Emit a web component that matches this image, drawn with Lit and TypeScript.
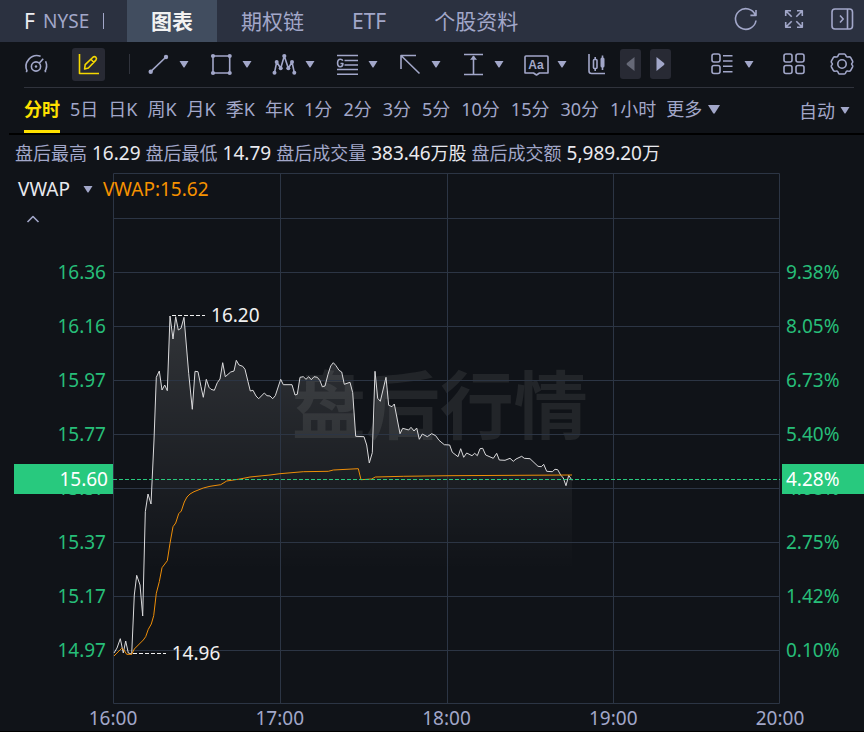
import { LitElement, html, css, svg } from "lit";
import { customElement, state } from "lit/decorators.js";

const PRICE =
  "114,653 117,648 120.3,638.7 123.3,653 125.7,641 128.3,653 131.7,654 134.3,595 136.7,575.3 140,585 142.7,616 145.3,511.7 148,494 151,504 154,440 156.3,377.3 159.3,371 162,390 164.7,385 167.3,390.7 170,316 173,339 175.7,316.7 178.3,330 181,328.3 184,317.3 188.7,373.3 192.3,409.3 195,371.3 198,371.7 201,386.7 203.3,397.3 206.3,379.3 209,387.3 211,389.3 214.3,390.3 217.3,382.7 220,379 222.7,362.7 225.3,376.7 230.7,372 234,371 236.3,360.3 239,365 242.7,366.3 245,369.3 248,381.7 250.3,391 253,390.3 256,396 258.7,398.7 264.3,393 267,395.7 270,396 272.7,398.7 275.3,395.7 280.7,379.3 283.3,384.7 292,384.7 295,395 297.3,394.3 300,377.3 303.3,376.7 306,379.3 308.7,376.7 311.3,379.7 314,376.7 317.3,377.3 320,380.7 322.3,386.7 325,386 328,374.3 330.7,366 333.3,362.7 336,365.7 339,370.3 341.7,372 344.3,384.3 350,382.3 352.7,392.7 355.7,436.3 364,436.7 366.7,445 369.3,463 372.3,452.7 375,371.3 377.7,398.3 380.3,401.3 386,377.3 388.7,405.3 392,406.7 394.3,404 400,433.7 402.7,428.3 408.7,430 411,427.3 414,431 416.7,428 419.3,439.3 422.3,434 427.3,436.7 431.7,433.7 435.7,435.7 439,440.3 444.3,444.7 449.7,445 452.3,452.3 458,456.7 460.7,448.7 463.7,457.3 466.7,453 472,455.7 474.7,453.3 477.3,455.7 480,448.7 482.7,448.3 485.7,455 493.3,458.3 496.7,453.3 499.3,460 505,460.3 510,458.3 513.3,461.3 516,459 521.7,456.3 524.3,458.3 530,458.7 538,466.3 541.3,466.7 543.7,464.3 546.7,471.3 552.3,471.7 555,469.3 557.7,469.7 560.7,475 563.3,478 566,485.7 568.7,475.3 572,480.3";

const VWAP =
  "114,656 121.7,648.3 124,650 126.7,654.3 131.7,654.3 134.3,649 143.3,640 145.7,636.7 148.3,629.3 151.3,624 153.7,615.7 156.3,593.3 159.3,581.7 162,567.7 167.3,560.7 170,543.3 173,526.7 175.7,523 178.7,513.7 181.3,511 184.3,502 187,497 190,494 194,491.7 203.3,488 210,486.3 220.7,484.7 226.7,481 240,479 250,477 270,475 280,473.7 303.3,471.7 328.3,471.3 333.3,470 358.3,468.7 361,479.7 371.7,479 375.3,477 403.3,476.3 450,475.7 572,475";

const ROWS = [218, 272, 326, 380, 434, 488, 542, 596, 650];
const COLS = [280, 447, 613];
const PRICES = ["16.36", "16.16", "15.97", "15.77", "15.57", "15.37", "15.17", "14.97"];
const PERCENTS = ["9.38%", "8.05%", "6.73%", "5.40%", "4.08%", "2.75%", "1.42%", "0.10%"];
const TIMES = ["16:00", "17:00", "18:00", "19:00", "20:00"];
const DAYS = ["分时", "5日", "日K", "周K", "月K", "季K", "年K"];
const MINUTES = ["1分", "2分", "3分", "5分", "10分", "15分", "30分", "1小时"];
const TABS = ["图表", "期权链", "ETF", "个股资料"];
const STATS = [
  ["盘后最高", "16.29", ""],
  ["盘后最低", "14.79", ""],
  ["盘后成交量", "383.46", "万股"],
  ["盘后成交额", "5,989.20", "万"],
];

const icon = (body: unknown, w = 24) =>
  html`<svg class="icon" width=${w} height="24" viewBox="0 0 ${w} 24" aria-hidden="true">${body}</svg>`;
const caret = html`<svg class="caret" width="10" height="7" viewBox="0 0 10 7" aria-hidden="true"><path class="solid" d="M.5 0h9L5.6 6.2q-.6.7-1.2 0z" /></svg>`;

const gauge = svg`<path d="M3.2 19.5A11 11 0 0 1 16.6 4.2M21.6 9.3A11 11 0 0 1 20.9 19.5M1.8 19.5h1.4M20.6 19.5h1.6"/><circle cx="12" cy="14.5" r="4.6"/><circle class="solid" cx="12" cy="14.5" r="1.2"/><path d="M15.2 11.2l4-4.4"/>`;
const pencil = svg`<path d="M2.5 2v19.5H22"/><path d="M7.6 17l.6-4.4 8-7.600q1.400-1 2.700.3 1.200 1.400 0 2.800l-7.500 7.900zM14 7.300l2.900 3.200"/>`;
const refresh = svg`<path d="M21.4 8.2A10.3 10.3 0 1 0 22 13.5M22 3v5.4h-5.6"/>`;
const expand = svg`<path d="M3.700 9V3.700H9M3.700 3.700l6 6M15 3.700h5.300V9M20.300 3.700l-6 6M3.700 15v5.300H9M3.700 20.300l6-6M20.300 15v5.300H15M20.300 20.300l-6-6"/>`;
const panel = svg`<rect x="2" y="2" width="20.500" height="20" rx="3"/><path d="M17.500 2v20M10 8.500l3.200 3.500-3.200 3.500"/>`;
const candles = svg`<path d="M2 2v17q0 2.500 2.500 2.500H18"/><path d="M8.200 5v2.500M8.200 16.500V19M15.500 3.500V18"/><rect x="6.500" y="7.500" width="3.500" height="9" rx="1"/><rect class="solid" x="13.500" y="5.500" width="4" height="10" rx="1.500"/>`;
const list = svg`<rect x="2" y="2" width="8" height="8" rx="2"/><rect x="2" y="13.500" width="8" height="8" rx="2"/><path d="M13 3.700h9.500M13 9h9.500M13 14.300h9.500M13 19.700h9.500"/>`;
const tiles = svg`<rect x="2" y="2" width="8" height="8" rx="2"/><rect x="14" y="2" width="8" height="8" rx="2"/><rect x="2" y="13.500" width="8" height="8" rx="2"/><rect x="14" y="13.500" width="8" height="8" rx="2"/>`;
const gear = svg`<circle cx="12" cy="12" r="4.200"/><path d="M9.600 2h4.800q.8 0 1.200 1l.5 1.200q.6 1 1.700.8l1.400-.2q1 0 1.500.9l1.900 3.500q.4.800-.2 1.500l-.5.500q-.6.800 0 1.600l.5.500q.6.700.2 1.500l-1.900 3.500q-.5.900-1.500.9l-1.400-.2q-1.100-.2-1.700.8l-.5 1.200q-.4 1-1.200 1H9.600q-.8 0-1.200-1l-.5-1.200q-.6-1-1.700-.8l-1.400.2q-1 0-1.500-.9l-1.900-3.500q-.4-.8.200-1.500l.5-.5q.6-.8 0-1.600l-.5-.5q-.6-.7-.2-1.500l1.900-3.500q.5-.9 1.500-.9l1.400.2q1.100.2 1.700-.8L8.400 3q.4-1 1.200-1z"/>`;

const TOOLS: [string, unknown][] = [
  ["线段", svg`<path d="M5.700 19.700L21 5"/><circle class="solid" cx="5.700" cy="19.700" r="2.200"/><circle class="solid" cx="21" cy="5" r="2.200"/>`],
  ["矩形", svg`<rect x="5" y="4" width="16.700" height="17"/><g class="solid"><circle cx="5" cy="4" r="2.100"/><circle cx="21.700" cy="4" r="2.100"/><circle cx="5" cy="21" r="2.100"/><circle cx="21.700" cy="21" r="2.100"/></g>`],
  ["形态", svg`<path d="M3.500 20.700L5.700 10l4 6.300L13.300 4l4 12.300L21 10l2.300 10.700"/><g class="solid"><circle cx="3.500" cy="20.700" r="2"/><circle cx="5.700" cy="10" r="2"/><circle cx="9.700" cy="16.300" r="2"/><circle cx="13.300" cy="4" r="2.100"/><circle cx="17.300" cy="16.300" r="2"/><circle cx="21" cy="10" r="2"/><circle cx="23.300" cy="20.700" r="2"/></g>`],
  ["江恩", svg`<path d="M3 3.500h21M10.500 8.500H24M10.500 13H24M3 17.500h21M3 22.300h21"/><path d="M8.800 8.800Q8.200 7.200 6.300 7.200 3.600 7.200 3.600 11T6.300 14.700q2.600 0 2.600-3.200H6.500"/>`],
  ["箭头", svg`<path d="M19 3.500H4V17M4 3.500L22.500 21.500"/>`],
  ["测量", svg`<path d="M4 2.500h19M4 22.500h19M13.500 4v18"/><path class="solid" d="M13.500 3.500l3.500 4.300h-7z"/>`],
  ["文字", svg`<path d="M4 4h20q1 0 1 1v16h-8.500L13.500 23l-3-2H2V5q0-1 1-1z"/><text class="aa" x="13" y="17">Aa</text>`],
];

@customElement("app-root")
export class AppRoot extends LitElement {
  @state() private tab = TABS[0];
  @state() private period = DAYS[0];

  static styles = css`
    :host {
      --ink: #a2a7c9;
      --line: #2c3544;
      --up: #27be79;
      display: flex;
      flex-direction: column;
      min-height: 100vh;
      box-sizing: border-box;
      background: #101318;
      color: var(--ink);
      font: 18px/24px "Noto Sans", "Noto Sans CJK SC", sans-serif;
      white-space: nowrap;
      overflow: hidden;
    }
    button {
      font: inherit;
      color: inherit;
      background: none;
      border: 0;
      margin: 0;
      padding: 0;
      display: flex;
      align-items: center;
      cursor: pointer;
    }
    .icon, .caret { display: block; flex: none; overflow: visible; }
    .icon { fill: none; stroke: currentColor; stroke-width: 1.6; stroke-linejoin: round; }
    .solid { fill: currentColor; stroke: none; }
    .aa {
      fill: currentColor;
      stroke: none;
      font: bold 12px "Liberation Sans", sans-serif;
      text-anchor: middle;
    }
    header {
      display: flex;
      height: 42px;
      background: #2b3140;
      padding: 0 10px 0 24px;
    }
    .symbol { display: flex; align-items: center; width: 103px; font-size: 19px; }
    .ticker { width: 19px; font-size: 21px; color: #ededf2; }
    .bar { width: 1px; height: 16px; background: currentColor; margin-left: 14px; }
    .tabs { display: flex; flex: 1; }
    .tab { padding: 0 24px; font-size: 21px; }
    .tab.on { background: #414d5f; color: #f2f2f2; font-weight: 700; }
    .group { display: flex; align-items: center; gap: 24px; }
    .window { padding-bottom: 4px; }
    .toolbar {
      display: flex;
      align-items: center;
      height: 44px;
      margin: 0 10px 0 24px;
      padding-bottom: 1px;
      border-bottom: 1px solid #30333c;
    }
    .draw {
      width: 33px;
      height: 33px;
      justify-content: center;
      border-radius: 3px;
      background: #282a34;
      color: #f5d800;
    }
    .sep { width: 1px; height: 20px; background: #30333c; }
    .tools { display: flex; gap: 19px; margin: 0 20px 0 15px; }
    .tool { gap: 8px; }
    .steps { display: flex; gap: 9px; margin: 0 auto 0 13px; }
    .step {
      width: 21px;
      height: 30px;
      justify-content: center;
      border-radius: 3px;
      background: #282a34;
    }
    .step:disabled { color: #666977; }
    .views { gap: 10px; margin-right: 4px; }
    .periods {
      display: flex;
      height: 45px;
      margin-left: 9px;
      padding: 0 14px 0 15px;
      border-bottom: 2px solid #000;
      gap: 10px;
    }
    .days, .minutes { display: flex; }
    .days { gap: 10px; }
    .minutes { gap: 11px; }
    .period { border-bottom: 3px solid transparent; }
    .period.on { color: #ffe100; border-color: #ffe100; font-weight: 700; }
    .more { gap: 6px; }
    .auto { gap: 5px; margin-left: auto; }
    .stats {
      display: flex;
      align-items: center;
      gap: 5px;
      height: 36px;
      margin: 0;
      padding: 0 0 2px 15px;
    }
    .stat { display: flex; gap: 5px; }
    .stat dd { margin: 0; color: #e9e9ee; font-size: 19px; }
    .unit { font-size: 18px; }
    .chart {
      position: relative;
      flex: 1;
      display: grid;
      grid-template: minmax(420px, 1fr) 28px / 113px minmax(0, 1fr) 84px;
      font-size: 19px;
    }
    .axis {
      position: relative;
      display: grid;
      grid-template-rows: 72fr repeat(8, 54fr) 27fr;
      color: var(--up);
      align-items: center;
    }
    .axis::before { content: ""; }
    .left { justify-items: end; padding-right: 7px; }
    .right { padding-left: 6px; }
    .badge {
      position: absolute;
      top: 57.7%;
      transform: translateY(-50%);
      height: 30px;
      line-height: 30px;
      background: #28c97e;
      color: #fff;
      box-sizing: border-box;
    }
    .left .badge { left: 14px; right: 0; text-align: right; padding-right: 5px; }
    .right .badge { left: 2px; right: 0; padding-left: 4px; }
    .plot { position: relative; }
    .canvas { position: absolute; inset: 0; width: 100%; height: 100%; }
    .canvas * { vector-effect: non-scaling-stroke; fill: none; }
    .canvas .grid { stroke: var(--line); }
    .canvas .area { fill: url(#fade); }
    .canvas .price { stroke: #d9d9db; stroke-linejoin: round; }
    .canvas .vwap { stroke: #ee8e08; stroke-linejoin: round; }
    .canvas .now { stroke: #28c97e; stroke-dasharray: 4 2; }
    .canvas .lead { stroke: #f0f0f0; stroke-dasharray: 4 2; }
    .mark {
      position: absolute;
      left: 49%;
      top: 43%;
      transform: translate(-50%, -50%);
      font: 700 74px/80px "Noto Sans CJK SC", sans-serif;
      color: #222529;
    }
    .tag { position: absolute; transform: translateY(-50%); color: #f0f0f0; }
    .high { left: 14.7%; top: 26.7%; }
    .low { left: 8.8%; top: 90.4%; }
    .times { grid-area: 2 / 2; display: flex; justify-content: space-between; align-items: center; }
    .time { display: flex; justify-content: center; width: 0; }
    .legend { position: absolute; left: 18px; top: 4px; display: flex; gap: 10px; color: #f79200; }
    .indicator { gap: 13px; color: var(--ink); }
    .name { color: #e9e9ee; }
    .fold { position: absolute; left: 26px; top: 39px; height: 14px; }
    .foot { height: 1px; background: #000; margin-top: -1px; }
  `;

  private periodButton(p: string) {
    return html`<button class="period ${p === this.period ? "on" : ""}" @click=${() => (this.period = p)}>${p}</button>`;
  }

  render() {
    return html`
      <header>
        <div class="symbol"><span class="ticker">F</span><span>NYSE</span><span class="bar"></span></div>
        <nav class="tabs">
          ${TABS.map((t) => html`<button class="tab ${t === this.tab ? "on" : ""}" @click=${() => (this.tab = t)}>${t}</button>`)}
        </nav>
        <div class="group window">
          <button aria-label="刷新">${icon(refresh)}</button>
          <button aria-label="全屏">${icon(expand)}</button>
          <button aria-label="侧栏">${icon(panel)}</button>
        </div>
      </header>

      <div class="toolbar">
        <div class="group">
          <button aria-label="仪表">${icon(gauge)}</button>
          <button class="draw" aria-label="画线">${icon(pencil)}</button>
          <span class="sep"></span>
        </div>
        <div class="tools">
          ${TOOLS.map(([label, body]) => html`<button class="tool" aria-label=${label}>${icon(body, 26)}${caret}</button>`)}
        </div>
        <button aria-label="K线">${icon(candles, 20)}</button>
        <div class="steps">
          <button class="step" aria-label="上一组" disabled>
            <svg class="icon" width="9" height="14" viewBox="0 0 9 14"><path class="solid" d="M8.500 0v14L1 8q-1-1 0-2z" /></svg>
          </button>
          <button class="step" aria-label="下一组">
            <svg class="icon" width="9" height="14" viewBox="0 0 9 14"><path class="solid" d="M.5 0v14L8 8q1-1 0-2z" /></svg>
          </button>
        </div>
        <div class="group">
          <button class="views" aria-label="视图">${icon(list)}${caret}</button>
          <button aria-label="布局">${icon(tiles)}</button>
          <button aria-label="设置">${icon(gear)}</button>
        </div>
      </div>

      <nav class="periods">
        <div class="days">${DAYS.map((p) => this.periodButton(p))}</div>
        <div class="minutes">${MINUTES.map((p) => this.periodButton(p))}</div>
        <button class="period more">更多<svg class="icon" width="12" height="9" viewBox="0 0 12 9"><path class="solid" d="M0 0h12L6.800 8.200q-.8.900-1.600 0z" /></svg></button>
        <button class="auto">自动${caret}</button>
      </nav>

      <dl class="stats">
        ${STATS.map(([k, v, u]) => html`<div class="stat"><dt>${k}</dt><dd>${v}<span class="unit">${u}</span></dd></div>`)}
      </dl>

      <main class="chart">
        <div class="axis left">
          ${PRICES.map((p) => html`<span>${p}</span>`)}
          <span class="badge">15.60</span>
        </div>
        <div class="plot">
          <div class="mark">盘后行情</div>
          <svg class="canvas" viewBox="113 173 667 531" preserveAspectRatio="none" role="img" aria-label="VWAP">
            <defs>
              <linearGradient id="fade" gradientUnits="userSpaceOnUse" x1="0" y1="316" x2="0" y2="570">
                <stop offset="0" stop-color="#fff" stop-opacity=".14" />
                <stop offset="1" stop-color="#fff" stop-opacity="0" />
              </linearGradient>
            </defs>
            <polygon class="area" points="114,704 ${PRICE} 572,704" />
            <rect class="grid" x="113.5" y="173.5" width="666" height="530" />
            ${ROWS.map((y) => svg`<line class="grid" x1="113" x2="780" y1=${y + 0.5} y2=${y + 0.5} />`)}
            ${COLS.map((x) => svg`<line class="grid" x1=${x + 0.5} x2=${x + 0.5} y1="173" y2="704" />`)}
            <polyline class="price" points=${PRICE} />
            <polyline class="vwap" points=${VWAP} />
            <line class="now" x1="113" x2="780" y1="479.5" y2="479.5" />
            <line class="lead" x1="172" x2="205" y1="315.5" y2="315.5" />
            <line class="lead" x1="133" x2="166" y1="653.5" y2="653.5" />
          </svg>
          <span class="tag high">16.20</span>
          <span class="tag low">14.96</span>
        </div>
        <div class="axis right">
          ${PERCENTS.map((p) => html`<span>${p}</span>`)}
          <span class="badge">4.28%</span>
        </div>
        <div class="times">${TIMES.map((t) => html`<span class="time">${t}</span>`)}</div>
        <div class="legend">
          <button class="indicator"><span class="name">VWAP</span>${caret}</button>
          <span>VWAP:15.62</span>
        </div>
        <button class="fold" aria-label="收起">
          <svg class="icon" width="14" height="8" viewBox="0 0 14 8"><path d="M1.500 7L7 1.500 12.500 7" /></svg>
        </button>
      </main>
      <div class="foot"></div>
    `;
  }
}
